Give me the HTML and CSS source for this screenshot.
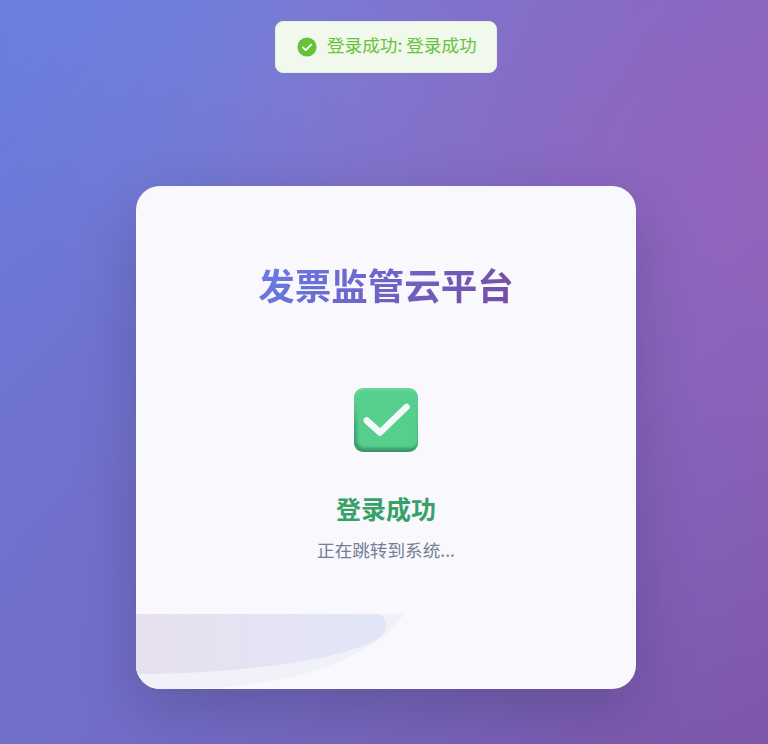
FILE: index.html
```html
<!DOCTYPE html>
<html lang="zh-CN">
<head>
    <meta charset="UTF-8">
    <meta name="viewport" content="width=device-width, initial-scale=1.0">
    <title>发票监管云平台</title>
    <link rel="stylesheet" href="styles.css">
</head>
<body>
    <div class="toast">
        <svg class="toast-icon" viewBox="0 0 20 20">
            <circle cx="10" cy="10" r="9.6" fill="#67c23a"/>
            <path d="M5.8 10.4 L8.7 13.1 L14.2 7.6" fill="none" stroke="#fff" stroke-width="1.8" stroke-linecap="round" stroke-linejoin="round"/>
        </svg>
        <span class="toast-text">登录成功: 登录成功</span>
    </div>

    <main class="card">
        <!-- faint decorations behind the content -->
        <svg class="card-shape" viewBox="0 0 500 503" aria-hidden="true">
            <defs>
                <linearGradient id="wave" x1="0" y1="0" x2="1" y2="0">
                    <stop offset="0" stop-color="#e7e0ef"/>
                    <stop offset="1" stop-color="#e2e6f8"/>
                </linearGradient>
            </defs>
            <path d="M326 40 L310 130 C316 170 330 225 345 270 L362 300 C395 280 440 220 470 130 L490 90 L490 40 Z" fill="#fff" opacity="0.2"/>
            <path d="M0 428 H268 C250 455 190 503 40 503 L0 503 Z" fill="#f1f1fa"/>
            <path d="M0 428 H244 C252 432 252 445 244 451 C215 472 120 487 0 488 Z" fill="url(#wave)"/>
        </svg>

        <h1 class="card-title">发票监管云平台</h1>

        <svg class="check-icon" viewBox="0 0 64 64">
            <defs>
                <linearGradient id="box" x1="0" y1="0" x2="0" y2="1">
                    <stop offset="0" stop-color="#6bdca0"/>
                    <stop offset="0.6" stop-color="#3fa873"/>
                    <stop offset="1" stop-color="#3a9568"/>
                </linearGradient>
                <filter id="soft" x="-10%" y="-10%" width="120%" height="120%">
                    <feGaussianBlur stdDeviation="1.6"/>
                </filter>
                <clipPath id="box-clip">
                    <rect x="0" y="0" width="64" height="64" rx="9"/>
                </clipPath>
            </defs>
            <g clip-path="url(#box-clip)">
                <rect x="0" y="0" width="64" height="64" fill="url(#box)"/>
                <rect x="3" y="2" width="61" height="58" rx="8" fill="#56cf8e" filter="url(#soft)"/>
            </g>
            <path d="M12.7 32.5 L26 44.5 L52.5 19" fill="none" stroke="#f5f8f8" stroke-width="6.5" stroke-linecap="round" stroke-linejoin="round"/>
        </svg>

        <h2 class="status-title">登录成功</h2>
        <p class="status-text">正在跳转到系统...</p>
    </main>
</body>
</html>
```

FILE: styles.css
```css
*{
    box-sizing: border-box;
}
body{
    height: 744px;
    margin: 0;
    padding: 186px 0 0 136px;
    overflow: hidden;
    font-family: "Noto Sans CJK SC", "Liberation Sans", sans-serif;
    background:
        radial-gradient(circle at 100% 22%, rgba(160, 100, 190, 0.7), rgba(160, 100, 190, 0) 60%),
        radial-gradient(circle at 45% 10%, rgba(255, 255, 255, 0.06), rgba(255, 255, 255, 0) 45%),
        radial-gradient(circle at 0% 100%, rgba(110, 115, 205, 0.6), rgba(110, 115, 205, 0) 55%),
        linear-gradient(135deg, #6a7fe0 0%, #7d56aa 100%);
}
/*
* Toast
*/
.toast{
    position: absolute;
    top: 21px;
    left: 275px;
    display: flex;
    align-items: center;
    gap: 10px;
    width: 222px;
    height: 52px;
    padding: 0 10px 0 21px;
    background-color: #f0f9eb;
    border: 1px solid #e1f3d8;
    border-radius: 8px;
}
.toast-icon{
    width: 20px;
    height: 20px;
    flex-shrink: 0;
}
.toast-text{
    padding-bottom: 5px;
    color: #67c23a;
    font-size: 17.6px;
    line-height: 1;
    white-space: nowrap;
}
/*
* Card
*/
.card{
    position: relative;
    display: flex;
    flex-direction: column;
    align-items: center;
    width: 500px;
    height: 503px;
    padding-top: 72px;
    overflow: hidden;
    background-color: #f9f8fd;
    border-radius: 24px;
    box-shadow: 0 20px 60px rgba(0, 0, 0, 0.17);
}
.card-shape{
    position: absolute;
    top: 0;
    left: 0;
    width: 100%;
    height: 100%;
}
.card-title{
    position: relative;
    margin: 0;
    font-size: 36.5px;
    line-height: 54px;
    font-weight: 700;
    background: linear-gradient(135deg, #667eea 0%, #764ba2 100%);
    -webkit-background-clip: text;
    background-clip: text;
    color: transparent;
}
.check-icon{
    position: relative;
    width: 64px;
    height: 64px;
    margin-top: 76px;
}
.status-title{
    position: relative;
    margin: 39px 0 0 0;
    color: #38a169;
    font-size: 25px;
    line-height: 34px;
    font-weight: 700;
}
.status-text{
    position: relative;
    margin: 13px 0 0 0;
    color: #718096;
    font-size: 17.6px;
    line-height: 24px;
}
```
